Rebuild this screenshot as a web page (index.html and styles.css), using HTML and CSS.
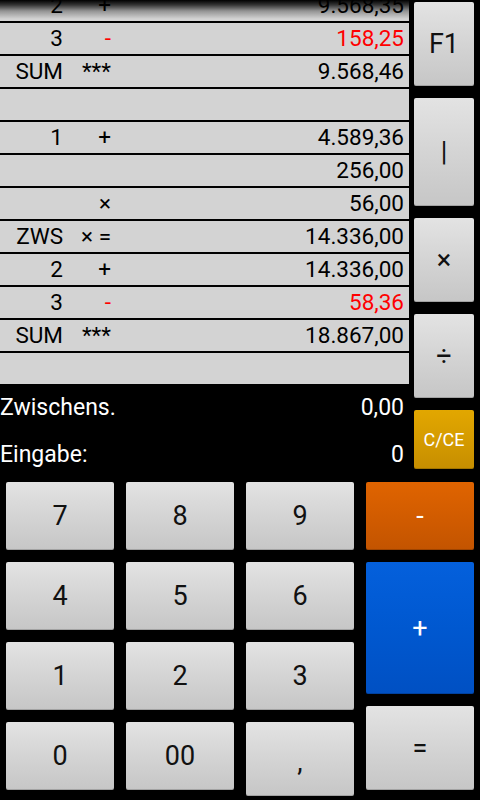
FILE: index.html
```html
<!DOCTYPE html>
<html>
<head>
<meta charset="utf-8">
<link rel="stylesheet" href="styles.css">
</head>
<body>
<div class="app">
  <div class="top">
    <div class="left">
      <div class="tape">
        <div class="row"><span class="cnt">2</span><span class="op">+</span><span class="val">9.568,35</span></div>
        <div class="row"><span class="cnt">3</span><span class="op neg">-</span><span class="val neg">158,25</span></div>
        <div class="row"><span class="cnt">SUM</span><span class="op">***</span><span class="val">9.568,46</span></div>
        <div class="row"><span class="cnt"></span><span class="op"></span><span class="val"></span></div>
        <div class="row"><span class="cnt">1</span><span class="op">+</span><span class="val">4.589,36</span></div>
        <div class="row"><span class="cnt"></span><span class="op"></span><span class="val">256,00</span></div>
        <div class="row"><span class="cnt"></span><span class="op">×</span><span class="val">56,00</span></div>
        <div class="row"><span class="cnt">ZWS</span><span class="op">× =</span><span class="val">14.336,00</span></div>
        <div class="row"><span class="cnt">2</span><span class="op">+</span><span class="val">14.336,00</span></div>
        <div class="row"><span class="cnt">3</span><span class="op neg">-</span><span class="val neg">58,36</span></div>
        <div class="row"><span class="cnt">SUM</span><span class="op">***</span><span class="val">18.867,00</span></div>
        <div class="row"><span class="cnt"></span><span class="op"></span><span class="val"></span></div>
        <div class="fade"></div>
      </div>
      <div class="display">
        <div class="disp-row"><span>Zwischens.</span><span>0,00</span></div>
        <div class="disp-row"><span>Eingabe:</span><span>0</span></div>
      </div>
    </div>
    <div class="side">
      <div class="btn side-f1">F1</div>
      <div class="btn side-bar">|</div>
      <div class="btn side-op">×</div>
      <div class="btn side-op">÷</div>
      <div class="btn side-clear">C/CE</div>
    </div>
  </div>
  <div class="keypad">
    <div class="btn key">7</div>
    <div class="btn key">8</div>
    <div class="btn key">9</div>
    <div class="btn key minus">-</div>
    <div class="btn key">4</div>
    <div class="btn key">5</div>
    <div class="btn key">6</div>
    <div class="opcol">
      <div class="btn key plus">+</div>
      <div class="btn key equals">=</div>
    </div>
    <div class="btn key">1</div>
    <div class="btn key">2</div>
    <div class="btn key">3</div>
    <div class="btn key">0</div>
    <div class="btn key">00</div>
    <div class="btn key comma">,</div>
  </div>
</div>
</body>
</html>
```

FILE: styles.css
```css
html, body {
  margin: 0;
  padding: 0;
  background: #000;
}
body {
  width: 480px;
  height: 800px;
  overflow: hidden;
  font-family: Roboto, "Liberation Sans", sans-serif;
}
.app {
  width: 480px;
  height: 800px;
}
.top {
  display: flex;
  height: 482px;
}
.left {
  width: 409px;
  display: flex;
  flex-direction: column;
}
.tape {
  position: relative;
  height: 384px;
  overflow: hidden;
  background: #000;
  display: flex;
  flex-direction: column;
  justify-content: flex-end;
}
.row {
  flex: 0 0 31px;
  height: 31px;
  margin-top: 2px;
  background: #d3d3d3;
  display: grid;
  grid-template-columns: 63px 48px 1fr;
  align-items: center;
  padding-right: 5px;
  font-size: 22.5px;
  line-height: 31px;
  color: #000;
}
.cnt, .op, .val {
  text-align: right;
  white-space: nowrap;
}
.neg {
  color: #ff0000;
}
.fade {
  position: absolute;
  left: 0;
  top: 0;
  width: 100%;
  height: 19px;
  background: linear-gradient(to bottom, #000 0, rgba(0,0,0,0.75) 5px, rgba(0,0,0,0.3) 11px, rgba(0,0,0,0) 19px);
}
.display {
  display: flex;
  flex-direction: column;
  color: #fff;
  font-size: 23px;
}
.disp-row {
  height: 47px;
  line-height: 47px;
  display: flex;
  justify-content: space-between;
  padding-right: 5px;
}
.side {
  margin-left: 5px;
  width: 60px;
  padding-top: 2px;
  display: flex;
  flex-direction: column;
  gap: 12px;
}
.btn {
  display: flex;
  align-items: center;
  justify-content: center;
  background: linear-gradient(to bottom, #e3e3e3 0%, #d4d4d4 50%, #c6c6c6 100%);
  border-radius: 2px;
  box-shadow: inset 0 -1px 0 rgba(0,0,0,0.18);
  color: #111;
  font-size: 27px;
}
.side-f1 { height: 84px; }
.side-bar { height: 108px; }
.side-op { height: 84px; }
.side-clear {
  height: 59px;
  font-size: 18px;
  color: #fff;
  background: linear-gradient(to bottom, #e2a700 0%, #d59b00 50%, #c68e00 100%);
}
.keypad {
  padding: 0 6px;
  display: grid;
  grid-template-columns: repeat(4, 108px);
  grid-template-rows: repeat(4, 68px);
  gap: 12px;
}
.key {
  height: 68px;
}
.minus {
  color: #fff;
  background: linear-gradient(to bottom, #e06400 0%, #d25c00 50%, #c35400 100%);
}
.opcol {
  grid-column: 4;
  grid-row: 2 / 5;
  display: flex;
  flex-direction: column;
  gap: 12px;
}
.plus {
  height: 132px;
  color: #fff;
  background: linear-gradient(to bottom, #0460dc 0%, #0058d0 50%, #0050c3 100%);
}
.equals {
  height: 84px;
}
.comma {
  padding-top: 6px;
}
```
